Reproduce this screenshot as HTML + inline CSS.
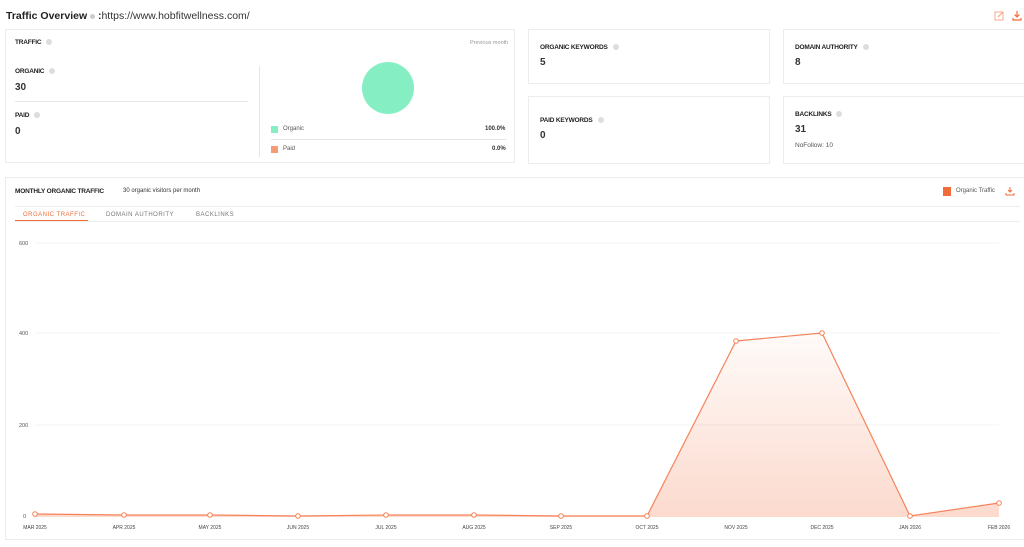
<!DOCTYPE html>
<html><head><meta charset="utf-8"><style>
*{margin:0;padding:0;box-sizing:border-box}
body{width:1024px;height:547px;background:#fff;font-family:"Liberation Sans",sans-serif;color:#222;position:relative;overflow:hidden}
.a{position:absolute}
.card{position:absolute;border:1px solid #ececec;background:#fff}
.lab{position:absolute;font-size:6.5px;font-weight:bold;letter-spacing:-0.2px;color:#222;white-space:nowrap}
.lab i{display:inline-block;width:6px;height:6px;border-radius:50%;background:#ddd;margin-left:5px;vertical-align:middle}
.num{position:absolute;font-size:10px;font-weight:bold;color:#333}
.sm{position:absolute;font-size:6px;color:#555;white-space:nowrap}
</style></head><body>
<div class="a" style="left:6px;top:10px;font-size:10.5px;font-weight:bold;color:#222;white-space:nowrap">Traffic Overview <span style="display:inline-block;width:5px;height:5px;border-radius:50%;background:#ccc;vertical-align:middle"></span> <span style="font-weight:bold">:</span><span style="font-weight:normal;color:#333">https://www.hobfitwellness.com/</span></div>
<svg class="a" style="left:994px;top:10px" width="11" height="11" viewBox="0 0 11 11"><rect x="1" y="2" width="8" height="8" fill="none" stroke="#f5a98a" stroke-width="1"/><path d="M4 7 L9 2" stroke="#f5a98a" stroke-width="1.2"/></svg>
<svg class="a" style="left:1012px;top:10px" width="10" height="11" viewBox="0 0 10 11"><path d="M5 1 V7 M2.5 4.5 L5 7 L7.5 4.5 M1 8 V10 H9 V8" fill="none" stroke="#f26b3a" stroke-width="1.2"/></svg>

<div class="card" style="left:5px;top:29px;width:510px;height:134px"></div>
<div class="lab" style="left:15px;top:39px">TRAFFIC<i></i></div>
<div class="sm" style="left:470px;top:40px;color:#999;font-size:5.5px">Previous month</div>
<div class="lab" style="left:15px;top:68px">ORGANIC<i></i></div>
<div class="num" style="left:15px;top:82px">30</div>
<div class="a" style="left:15px;top:101px;width:233px;height:1px;background:#e5e5e5"></div>
<div class="lab" style="left:15px;top:112px">PAID<i></i></div>
<div class="num" style="left:15px;top:126px">0</div>
<div class="a" style="left:259px;top:66px;width:1px;height:91px;background:#e5e5e5"></div>
<div class="a" style="left:362px;top:62px;width:52px;height:52px;border-radius:50%;background:#86eec3"></div>
<div class="a" style="left:271px;top:126px;width:7px;height:7px;background:#86eec3"></div>
<div class="sm" style="left:283px;top:126px">Organic</div>
<div class="sm" style="left:485px;top:126px;font-weight:bold;color:#333">100.0%</div>
<div class="a" style="left:271px;top:139px;width:235px;height:1px;background:#e5e5e5"></div>
<div class="a" style="left:271px;top:146px;width:7px;height:7px;background:#f59b76"></div>
<div class="sm" style="left:283px;top:146px">Paid</div>
<div class="sm" style="left:492px;top:146px;font-weight:bold;color:#333">0.0%</div>

<div class="card" style="left:528px;top:29px;width:242px;height:55px"></div>
<div class="lab" style="left:540px;top:44px">ORGANIC KEYWORDS<i></i></div>
<div class="num" style="left:540px;top:57px">5</div>
<div class="card" style="left:528px;top:96px;width:242px;height:68px"></div>
<div class="lab" style="left:540px;top:117px">PAID KEYWORDS<i></i></div>
<div class="num" style="left:540px;top:130px">0</div>
<div class="card" style="left:783px;top:29px;width:245px;height:55px"></div>
<div class="lab" style="left:795px;top:44px">DOMAIN AUTHORITY<i></i></div>
<div class="num" style="left:795px;top:57px">8</div>
<div class="card" style="left:783px;top:96px;width:245px;height:68px"></div>
<div class="lab" style="left:795px;top:111px">BACKLINKS<i></i></div>
<div class="num" style="left:795px;top:124px">31</div>
<div class="sm" style="left:795px;top:142px;font-size:6.5px">NoFollow: 10</div>

<div class="card" style="left:5px;top:177px;width:1020px;height:363px"></div>
<div class="lab" style="left:15px;top:188px">MONTHLY ORGANIC TRAFFIC</div>
<div class="sm" style="left:123px;top:188px;color:#333">30 organic visitors per month</div>
<div class="a" style="left:943px;top:187px;width:8px;height:9px;background:#f26b3a"></div>
<div class="sm" style="left:956px;top:188px">Organic Traffic</div>
<svg class="a" style="left:1005px;top:186px" width="10" height="10" viewBox="0 0 10 10"><path d="M5 1 V6 M3 4 L5 6 L7 4 M1 7 V9 H9 V7" fill="none" stroke="#f26b3a" stroke-width="1"/></svg>
<div class="a" style="left:15px;top:206px;width:1005px;height:1px;background:#eee"></div>
<div class="sm" style="left:23px;top:212px;color:#f26b3a;font-size:6px;letter-spacing:0.5px">ORGANIC TRAFFIC</div>
<div class="a" style="left:15px;top:220px;width:73px;height:1.5px;background:#f26b3a"></div>
<div class="sm" style="left:106px;top:212px;color:#777;letter-spacing:0.5px">DOMAIN AUTHORITY</div>
<div class="sm" style="left:196px;top:212px;color:#777;letter-spacing:0.5px">BACKLINKS</div>
<div class="a" style="left:15px;top:221px;width:1005px;height:1px;background:#eee"></div>

<svg class="a" style="left:0;top:0" width="1024" height="547">
<defs><linearGradient id="g" x1="0" y1="0" x2="0" y2="1"><stop offset="0" stop-color="#f26b3a" stop-opacity="0.03"/><stop offset="1" stop-color="#f26b3a" stop-opacity="0.25"/></linearGradient></defs>
<g stroke="#f3f3f3" stroke-width="1"><line x1="35" y1="243" x2="999" y2="243"/><line x1="35" y1="333" x2="999" y2="333"/><line x1="35" y1="425" x2="999" y2="425"/></g>
<g font-family="Liberation Sans" font-size="5.5" fill="#555"><text x="19" y="245">600</text><text x="19" y="335">400</text><text x="19" y="427">200</text><text x="23" y="518">0</text></g>
<path d="M35 514 L124 515 L210 515 L298 516 L386 515 L474 515 L561 516 L647 516 L736 341 L822 333 L910 516 L999 503 L999 517 L35 517Z" fill="url(#g)"/>
<polyline points="35,514 124,515 210,515 298,516 386,515 474,515 561,516 647,516 736,341 822,333 910,516 999,503" fill="none" stroke="#f5835a" stroke-width="1.2"/>
<g fill="#fff" stroke="#f5835a" stroke-width="1"><circle cx="35" cy="514" r="2.3"/><circle cx="124" cy="515" r="2.3"/><circle cx="210" cy="515" r="2.3"/><circle cx="298" cy="516" r="2.3"/><circle cx="386" cy="515" r="2.3"/><circle cx="474" cy="515" r="2.3"/><circle cx="561" cy="516" r="2.3"/><circle cx="647" cy="516" r="2.3"/><circle cx="736" cy="341" r="2.3"/><circle cx="822" cy="333" r="2.3"/><circle cx="910" cy="516" r="2.3"/><circle cx="999" cy="503" r="2.3"/></g>
<g font-family="Liberation Sans" font-size="5" fill="#444" text-anchor="middle"><text x="35" y="529">MAR 2025</text><text x="124" y="529">APR 2025</text><text x="210" y="529">MAY 2025</text><text x="298" y="529">JUN 2025</text><text x="386" y="529">JUL 2025</text><text x="474" y="529">AUG 2025</text><text x="561" y="529">SEP 2025</text><text x="647" y="529">OCT 2025</text><text x="736" y="529">NOV 2025</text><text x="822" y="529">DEC 2025</text><text x="910" y="529">JAN 2026</text><text x="999" y="529">FEB 2026</text></g>
</svg>
</body></html>
